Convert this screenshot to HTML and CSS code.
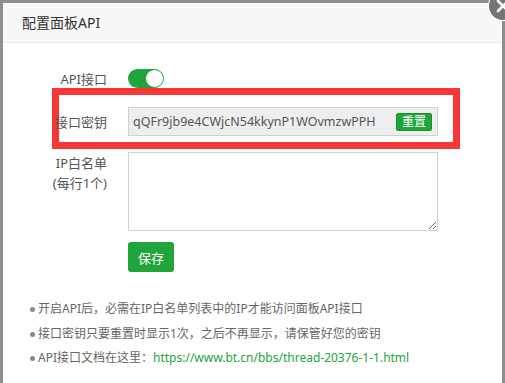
FILE: index.html
```html
<!DOCTYPE html>
<html lang="zh-CN">
<head>
<meta charset="utf-8">
<title>配置面板API</title>
<link rel="stylesheet" href="styles.css">
</head>
<body>
<div class="dialog">
  <div class="title">配置面板API</div>
  <span class="close" aria-label="关闭">
    <svg viewBox="0 0 28 28" width="28" height="28"><path d="M9 9 L19 19 M19 9 L9 19" stroke="#fff" stroke-width="2.6" stroke-linecap="round"/></svg>
  </span>
  <div class="body">
    <div class="row row-switch">
      <div class="label">API接口</div>
      <div class="field"><span class="switch"><span class="knob"></span></span></div>
    </div>
    <div class="row row-key">
      <div class="label">接口密钥</div>
      <div class="field">
        <div class="keybox">
          <span class="keytext">qQFr9jb9e4CWjcN54kkynP1WOvmzwPPH</span>
          <button class="btn-reset">重置</button>
        </div>
      </div>
    </div>
    <div class="row row-ip">
      <div class="label label-multi"><span>IP白名单</span><span>(每行1个)</span></div>
      <div class="field"><textarea class="ta"></textarea></div>
    </div>
    <div class="row row-save">
      <div class="label"></div>
      <div class="field"><button class="btn-save">保存</button></div>
    </div>
    <ul class="tips">
      <li>开启API后，必需在IP白名单列表中的IP才能访问面板API接口</li>
      <li>接口密钥只要重置时显示1次，之后不再显示，请保管好您的密钥</li>
      <li>API接口文档在这里：<a href="#">https://www.bt.cn/bbs/thread-20376-1-1.html</a></li>
    </ul>
  </div>
</div>
</body>
</html>
```
FILE: styles.css
```css
html, body {
  margin: 0;
  padding: 0;
  height: 100%;
  overflow: hidden;
}
body {
  background: #8e8e8e;
  font-family: "Noto Sans", "Noto Sans CJK SC", sans-serif;
  color: #555;
}
.dialog {
  position: relative;
  margin: 3px 3px 0 3px;
  height: 380px;
  background: #fff;
}
.title {
  height: 39px;
  line-height: 39px;
  padding-left: 19px;
  font-size: 14px;
  color: #333;
  background: #f8f8f8;
  border-bottom: 1px solid #eaeaea;
}
.close {
  position: absolute;
  top: -11px;
  right: -15px;
  width: 28px;
  height: 28px;
  border-radius: 50%;
  background: #757575;
  box-shadow: 0 0 0 1px #fff;
}
.close svg { display: block; }
.body {
  padding-top: 25px;
}
.row {
  display: flex;
  margin-left: 49px;
  width: 394px;
  border-style: solid;
  border-color: transparent;
  border-width: 0 7px;
}
.label {
  width: 48px;
  flex: 0 0 48px;
  display: flex;
  flex-direction: column;
  align-items: flex-end;
  justify-content: center;
  font-size: 13px;
  white-space: nowrap;
  color: #555;
}
.field {
  margin-left: 21px;
  display: flex;
  align-items: center;
}
.row-switch { height: 20px; }
.switch {
  display: flex;
  justify-content: flex-end;
  align-items: center;
  width: 35px;
  height: 19px;
  border-radius: 10px;
  background: #20a53a;
}
.knob {
  width: 17px;
  height: 17px;
  border-radius: 50%;
  background: #fff;
  border: 1px solid #20a53a;
  margin-right: -1px;
}
.row-key {
  border: 7px solid #f93636;
  padding: 12px 0 6px 0;
}
.keybox {
  box-sizing: border-box;
  width: 310px;
  height: 29px;
  border: 1px solid #d0d0d0;
  background: #eeeeee;
  display: flex;
  align-items: center;
  justify-content: space-between;
  padding: 0 5px 0 4px;
}
.keytext {
  font-size: 12.5px;
  color: #555;
}
.btn-reset {
  font-family: inherit;
  font-size: 12px;
  color: #fff;
  background: #20a53a;
  border: 1px solid #1a8f31;
  border-radius: 2px;
  width: 36px;
  height: 18px;
  padding: 0;
  line-height: 16px;
}
.row-ip {
  margin-top: 3px;
  align-items: flex-start;
}
.label-multi {
  justify-content: flex-start;
  line-height: 20px;
  padding-top: 1px;
}
.ta {
  box-sizing: border-box;
  width: 310px;
  height: 79px;
  border: 1px solid #d0d0d0;
  margin: 0;
  display: block;
}
.row-save { margin-top: 11px; }
.btn-save {
  font-family: inherit;
  font-size: 13px;
  color: #fff;
  background: #20a53a;
  border: 0;
  border-radius: 3px;
  width: 46px;
  height: 30px;
  padding: 0;
}
.tips {
  margin: 25px 0 0 0;
  padding: 0 0 0 35px;
  font-size: 12px;
  line-height: 24.5px;
  color: #666;
}
.tips li {
  list-style: none;
  position: relative;
}
.tips li::before {
  content: "";
  position: absolute;
  left: -8px;
  top: 10px;
  width: 5px;
  height: 5px;
  border-radius: 50%;
  background: #888;
}
.tips a {
  color: #20a53a;
  text-decoration: none;
}
```
